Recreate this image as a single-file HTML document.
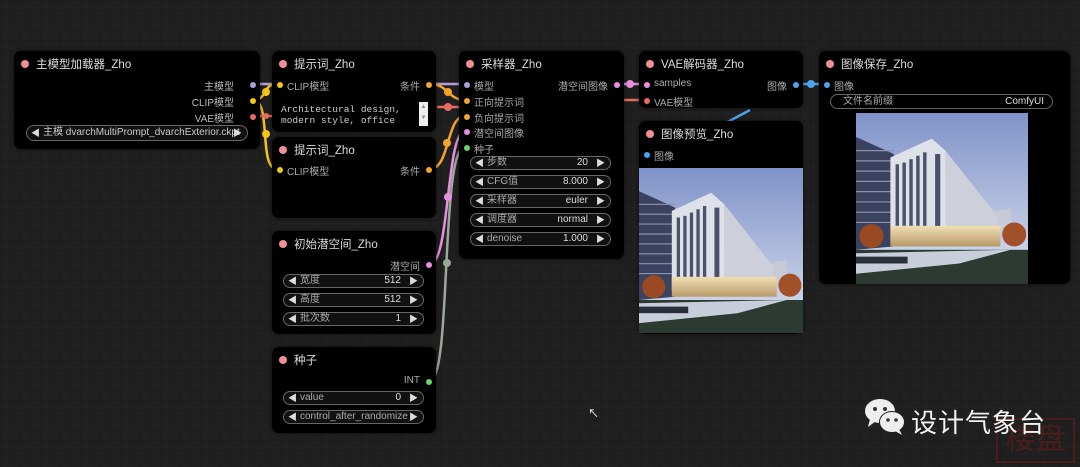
<!DOCTYPE html>
<html><head><meta charset="utf-8"><style>
body{margin:0;width:1080px;height:467px;overflow:hidden;background:#202020;
background-image:linear-gradient(#1c1c1c 1px,transparent 1px),linear-gradient(90deg,#1c1c1c 1px,transparent 1px);background-size:10px 10px;
font-family:"Liberation Sans","Noto Sans CJK SC",sans-serif;position:relative}
.n{position:absolute;background:#000;border-radius:7px;box-shadow:0 0 4px rgba(0,0,0,.6)}
.t{position:absolute;left:22px;top:5px;font-size:11.5px;color:#ddd;white-space:nowrap}
.t:before{content:"";position:absolute;left:-15px;top:4px;width:8px;height:8px;border-radius:50%;background:#f28e96}
.s{position:absolute;font-size:10px;color:#aaa;white-space:nowrap}
.d{position:absolute;width:6px;height:6px;border-radius:50%}
.w{position:absolute;height:14px;border:1px solid #666;border-radius:9px;background:#111;font-size:10px;line-height:12px;color:#aaa;box-sizing:border-box;white-space:nowrap}
.w .l{position:absolute;left:16px;top:0}
.w .v{position:absolute;right:22px;top:0;color:#ddd}
.w:before{content:"◀";position:absolute;left:4px;top:0;font-size:9px;color:#ddd}
.w:after{content:"▶";position:absolute;right:5px;top:0;font-size:9px;color:#ddd}
.w.nw:before,.w.nw:after{content:""}
.img{position:absolute}
</style></head><body>
<svg style="position:absolute;left:0;top:0" width="1080" height="467" fill="none" stroke-width="2.5">
<path d="M253 84 H277" stroke="#b39ddb"/>
<path d="M430 84 H465" stroke="#b39ddb"/>
<path d="M253 100 C268 100 262 84 277 84" stroke="#f5c518"/>
<path d="M253 100 C272 100 258 169 277 169" stroke="#f5c518"/>
<path d="M253 116 H272 M437 107 H462 M624 100 H644" stroke="#e96a5e"/>
<path d="M430 84 C448 84 448 100 465 100" stroke="#f5a32a"/>
<path d="M430 169 C450 169 446 116 465 116" stroke="#f5a32a"/>
<path d="M430 264 C450 264 446 131 465 131" stroke="#e88fe0"/>
<path d="M430 380 C452 380 440 147 465 147" stroke="#9aa89a"/>
<path d="M617 84 H644" stroke="#e88fe0"/>
<path d="M797 84 H825" stroke="#4ea3ee"/>
<path d="M750 110 L722 125" stroke="#4ea3ee"/>
<g stroke="none"><circle cx="266" cy="92" r="4" fill="#f5c518"/><circle cx="266" cy="134" r="4" fill="#f5c518"/><circle cx="266" cy="116" r="3" fill="#e96a5e"/>
<circle cx="448" cy="92" r="4" fill="#f5a32a"/><circle cx="448" cy="107" r="4" fill="#e96a5e"/><circle cx="447" cy="143" r="4" fill="#f5a32a"/><circle cx="448" cy="197" r="4" fill="#e88fe0"/><circle cx="447" cy="263" r="4" fill="#9aa89a"/>
<circle cx="630" cy="84" r="4" fill="#e88fe0"/><circle cx="811" cy="84" r="4" fill="#4ea3ee"/></g>
</svg>

<div class="n" style="left:14px;top:51px;width:246px;height:98px">
<div class="t">主模型加载器_Zho</div>
<div class="s" style="right:26px;top:27px;color:#bbb">主模型</div><div class="d" style="right:4px;top:31px;background:#b39ddb"></div>
<div class="s" style="right:26px;top:43px;color:#bbb">CLIP模型</div><div class="d" style="right:4px;top:47px;background:#f5c518"></div>
<div class="s" style="right:26px;top:59px;color:#bbb">VAE模型</div><div class="d" style="right:4px;top:63px;background:#e96a5e"></div>
<div class="w" style="left:12px;top:74px;width:222px;height:16px;line-height:14px"><span class="l" style="color:#ccc">主模 dvarchMultiPrompt_dvarchExterior.ckpt</span></div>
</div>

<div class="n" style="left:272px;top:51px;width:164px;height:81px">
<div class="t">提示词_Zho</div>
<div class="d" style="left:5px;top:31px;background:#f5c518"></div><div class="s" style="left:15px;top:27px">CLIP模型</div>
<div class="s" style="right:16px;top:27px">条件</div><div class="d" style="right:4px;top:31px;background:#f5a32a"></div>
<div style="position:absolute;left:9px;top:53px;font:9.5px 'Liberation Mono',monospace;color:#ccc;line-height:11px">Architectural design,<br>modern style, office</div>
<div style="position:absolute;left:147px;top:51px;width:9px;height:24px;background:#eee;font-size:6px;color:#888;text-align:center;line-height:11px">▲<br>▼</div>
</div>

<div class="n" style="left:272px;top:137px;width:164px;height:81px">
<div class="t">提示词_Zho</div>
<div class="d" style="left:5px;top:30px;background:#f5c518"></div><div class="s" style="left:15px;top:26px">CLIP模型</div>
<div class="s" style="right:16px;top:26px">条件</div><div class="d" style="right:4px;top:30px;background:#f5a32a"></div>
</div>

<div class="n" style="left:272px;top:231px;width:164px;height:103px">
<div class="t">初始潜空间_Zho</div>
<div class="s" style="right:16px;top:27px">潜空间</div><div class="d" style="right:4px;top:31px;background:#e88fe0"></div>
<div class="w" style="left:11px;top:43px;width:141px"><span class="l">宽度</span><span class="v">512</span></div>
<div class="w" style="left:11px;top:62px;width:141px"><span class="l">高度</span><span class="v">512</span></div>
<div class="w" style="left:11px;top:81px;width:141px"><span class="l">批次数</span><span class="v">1</span></div>
</div>

<div class="n" style="left:272px;top:347px;width:164px;height:86px">
<div class="t">种子</div>
<div class="s" style="right:16px;top:28px">INT</div><div class="d" style="right:4px;top:32px;background:#6ad36a"></div>
<div class="w" style="left:11px;top:44px;width:141px"><span class="l">value</span><span class="v">0</span></div>
<div class="w" style="left:11px;top:63px;width:141px"><span class="l">control_after_randomize</span></div>
</div>

<div class="n" style="left:459px;top:51px;width:165px;height:208px">
<div class="t">采样器_Zho</div>
<div class="d" style="left:5px;top:31px;background:#b39ddb"></div><div class="s" style="left:15px;top:27px">模型</div>
<div class="s" style="right:16px;top:27px">潜空间图像</div><div class="d" style="right:4px;top:31px;background:#e88fe0"></div>
<div class="d" style="left:5px;top:47px;background:#f5a32a"></div><div class="s" style="left:15px;top:43px">正向提示词</div>
<div class="d" style="left:5px;top:63px;background:#f5a32a"></div><div class="s" style="left:15px;top:59px">负向提示词</div>
<div class="d" style="left:5px;top:78px;background:#e88fe0"></div><div class="s" style="left:15px;top:74px">潜空间图像</div>
<div class="d" style="left:5px;top:94px;background:#6ad36a"></div><div class="s" style="left:15px;top:90px">种子</div>
<div class="w" style="left:11px;top:105px;width:141px"><span class="l">步数</span><span class="v">20</span></div>
<div class="w" style="left:11px;top:124px;width:141px"><span class="l">CFG值</span><span class="v">8.000</span></div>
<div class="w" style="left:11px;top:143px;width:141px"><span class="l">采样器</span><span class="v">euler</span></div>
<div class="w" style="left:11px;top:162px;width:141px"><span class="l">调度器</span><span class="v">normal</span></div>
<div class="w" style="left:11px;top:181px;width:141px"><span class="l">denoise</span><span class="v">1.000</span></div>
</div>

<div class="n" style="left:639px;top:51px;width:164px;height:57px">
<div class="t">VAE解码器_Zho</div>
<div class="d" style="left:5px;top:31px;background:#e88fe0"></div><div class="s" style="left:15px;top:27px">samples</div>
<div class="d" style="left:5px;top:47px;background:#e96a5e"></div><div class="s" style="left:15px;top:43px">VAE模型</div>
<div class="s" style="right:16px;top:27px">图像</div><div class="d" style="right:4px;top:31px;background:#4ea3ee"></div>
</div>

<svg width="0" height="0" style="position:absolute"><defs>
<linearGradient id="sky" x1="0" y1="0" x2="0" y2="1"><stop offset="0" stop-color="#7f93c9"/><stop offset="1" stop-color="#dde2ee"/></linearGradient>
<linearGradient id="gl" x1="0" y1="0" x2="0" y2="1"><stop offset="0" stop-color="#f1dfb4"/><stop offset="1" stop-color="#b89a6a"/></linearGradient>
<g id="bld">
<rect width="100" height="100" fill="url(#sky)"/>
<polygon points="0,14 22,24 22,78 0,80" fill="#3a4260"/>
<g stroke="#8b93ad" stroke-width="0.7"><path d="M0 22H22M0 28H22M0 34H22M0 40H22M0 46H22M0 52H22M0 58H22M0 64H22"/></g>
<polygon points="76,58 90,56 90,68 76,70" fill="#c7cbd8"/>
<polygon points="20,26 44,15 52,22 52,72 20,74" fill="#dfe1e8"/>
<polygon points="52,22 82,60 82,72 52,72" fill="#cdd0da"/>
<g fill="#4b526b"><rect x="23" y="30" width="2" height="36"/><rect x="27" y="29" width="2" height="37"/><rect x="31" y="27" width="2" height="39"/><rect x="35" y="25" width="2" height="41"/><rect x="39" y="23" width="2" height="43"/><rect x="46" y="24" width="3" height="44"/></g>
<rect x="20" y="66" width="64" height="12" fill="url(#gl)"/>
<circle cx="9" cy="72" r="7" fill="#9a4a22"/><circle cx="92" cy="71" r="7" fill="#a2502a"/>
<rect x="0" y="80" width="100" height="20" fill="#2c3a32"/>
<polygon points="0,82 90,80 60,88 0,94" fill="#c8cdda"/>
<rect x="0" y="84" width="30" height="4" fill="#2a2f3a"/>
</g></defs></svg>

<div class="n" style="left:639px;top:121px;width:164px;height:213px">
<div class="t">图像预览_Zho</div>
<div class="d" style="left:5px;top:31px;background:#4ea3ee"></div><div class="s" style="left:15px;top:27px">图像</div>
<svg class="img" style="left:0;top:47px" width="164" height="165" viewBox="0 0 100 100" preserveAspectRatio="none"><use href="#bld"/></svg>
</div>

<div class="n" style="left:819px;top:51px;width:251px;height:233px">
<div class="t">图像保存_Zho</div>
<div class="d" style="left:5px;top:31px;background:#4ea3ee"></div><div class="s" style="left:15px;top:27px">图像</div>
<div class="w nw" style="left:11px;top:43px;width:223px;height:15px;background:#000;line-height:13px"><span class="l" style="left:12px">文件名前缀</span><span class="v" style="right:8px">ComfyUI</span></div>
<svg class="img" style="left:37px;top:62px" width="172" height="171" viewBox="0 0 100 100" preserveAspectRatio="none"><use href="#bld"/></svg>
</div>

<div style="position:absolute;left:996px;top:418px;width:79px;height:45px;border:2px solid #5e1c1c;box-sizing:border-box;color:#5e1c1c;font-size:30px;line-height:40px;text-align:center;overflow:hidden;opacity:.7">楼盘</div>
<svg style="position:absolute;left:864px;top:397px" width="42" height="38" viewBox="0 0 42 38">
<ellipse cx="16" cy="14" rx="15" ry="12" fill="#eee"/><path d="M6 22 L4 30 L12 24Z" fill="#eee"/>
<circle cx="11" cy="12" r="2" fill="#333"/><circle cx="21" cy="12" r="2" fill="#333"/>
<ellipse cx="28" cy="25" rx="13" ry="11" fill="#202020"/><ellipse cx="28" cy="25" rx="12" ry="10" fill="#eee"/><path d="M35 32 L38 38 L31 34Z" fill="#eee"/>
<circle cx="24" cy="23" r="1.8" fill="#333"/><circle cx="32" cy="23" r="1.8" fill="#333"/>
</svg>
<div style="position:absolute;left:911px;top:403px;font-size:26px;color:#f2f2f2;letter-spacing:1px">设计气象台</div>
<div style="position:absolute;left:588px;top:405px;color:#fff;font-size:11px">↖</div>
</body></html>
